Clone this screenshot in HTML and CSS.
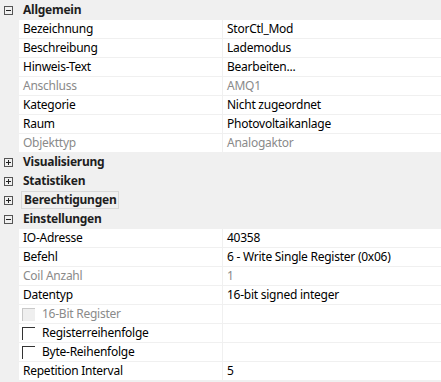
FILE: index.html
```html
<!DOCTYPE html>
<html lang="de">
<head>
    <meta charset="UTF-8">
    <title>Eigenschaften</title>
    <link rel="stylesheet" href="styles.css">
</head>
<body>
    <div class="grid">
        <div class="section">
            <span class="toggle"><svg width="9" height="9" viewBox="0 0 9 9"><rect x="0.5" y="0.5" width="8" height="8" fill="none" stroke="#555"/><path d="M2 4.5h5" stroke="#222"/></svg></span>
            <span class="title">Allgemein</span>
        </div>
        <div class="row"><span></span><span class="name">Bezeichnung</span><span class="value">StorCtl_Mod</span></div>
        <div class="row"><span></span><span class="name">Beschreibung</span><span class="value">Lademodus</span></div>
        <div class="row"><span></span><span class="name">Hinweis-Text</span><span class="value">Bearbeiten...</span></div>
        <div class="row disabled"><span></span><span class="name">Anschluss</span><span class="value">AMQ1</span></div>
        <div class="row"><span></span><span class="name">Kategorie</span><span class="value">Nicht zugeordnet</span></div>
        <div class="row"><span></span><span class="name">Raum</span><span class="value">Photovoltaikanlage</span></div>
        <div class="row disabled"><span></span><span class="name">Objekttyp</span><span class="value">Analogaktor</span></div>

        <div class="section">
            <span class="toggle"><svg width="9" height="9" viewBox="0 0 9 9"><rect x="0.5" y="0.5" width="8" height="8" fill="none" stroke="#555"/><path d="M2 4.5h5M4.5 2v5" stroke="#222"/></svg></span>
            <span class="title">Visualisierung</span>
        </div>
        <div class="section">
            <span class="toggle"><svg width="9" height="9" viewBox="0 0 9 9"><rect x="0.5" y="0.5" width="8" height="8" fill="none" stroke="#555"/><path d="M2 4.5h5M4.5 2v5" stroke="#222"/></svg></span>
            <span class="title">Statistiken</span>
        </div>
        <div class="section">
            <span class="toggle"><svg width="9" height="9" viewBox="0 0 9 9"><rect x="0.5" y="0.5" width="8" height="8" fill="none" stroke="#555"/><path d="M2 4.5h5M4.5 2v5" stroke="#222"/></svg></span>
            <span class="title focused">Berechtigungen</span>
        </div>
        <div class="section">
            <span class="toggle"><svg width="9" height="9" viewBox="0 0 9 9"><rect x="0.5" y="0.5" width="8" height="8" fill="none" stroke="#555"/><path d="M2 4.5h5" stroke="#222"/></svg></span>
            <span class="title">Einstellungen</span>
        </div>
        <div class="row"><span></span><span class="name">IO-Adresse</span><span class="value">40358</span></div>
        <div class="row"><span></span><span class="name">Befehl</span><span class="value">6 - Write Single Register (0x06)</span></div>
        <div class="row disabled"><span></span><span class="name">Coil Anzahl</span><span class="value">1</span></div>
        <div class="row"><span></span><span class="name">Datentyp</span><span class="value">16-bit signed integer</span></div>
        <div class="row disabled"><span></span><span class="name check"><span class="box"></span>16-Bit Register</span><span class="value"></span></div>
        <div class="row"><span></span><span class="name check"><span class="box"></span>Registerreihenfolge</span><span class="value"></span></div>
        <div class="row"><span></span><span class="name check"><span class="box"></span>Byte-Reihenfolge</span><span class="value"></span></div>
        <div class="row"><span></span><span class="name">Repetition Interval</span><span class="value">5</span></div>
    </div>
</body>
</html>
```

FILE: styles.css
```css
body {
    margin: 0;
    background-color: #f0f0f0;
    font-family: "Noto Sans", "Open Sans", sans-serif;
    font-size: 12px;
    letter-spacing: -0.25px;
    color: #000;
}
.grid {
    display: flex;
    flex-direction: column;
    gap: 1px;
    padding-top: 1px;
}
.row, .section {
    display: grid;
    grid-template-columns: 18px 203px 1fr;
    column-gap: 1px;
    height: 18px;
    line-height: 18px;
}
.section {
    grid-template-columns: 18px 1fr;
}
.name, .value {
    background-color: #fff;
    padding-left: 4px;
    white-space: nowrap;
    overflow: hidden;
}
.disabled .name, .disabled .value {
    color: #8a8a8a;
}
.toggle {
    display: flex;
    align-items: center;
    padding-left: 4px;
}
.toggle svg {
    display: block;
}
.title {
    font-weight: bold;
    padding-left: 4px;
    color: #1e1e1e;
}
.focused {
    justify-self: start;
    margin-left: 2px;
    padding: 0 2px;
    height: 16px;
    line-height: 16px;
    border: 1px solid #d8d8d8;
}
.check {
    display: flex;
    align-items: center;
    padding-left: 3px;
}
.box {
    width: 13px;
    height: 13px;
    border-top: 1px solid #333;
    border-left: 1px solid #333;
    margin-right: 7px;
    box-sizing: border-box;
}
.disabled .box {
    background-color: #efefef;
    border-color: #c8c8c8;
}
```
